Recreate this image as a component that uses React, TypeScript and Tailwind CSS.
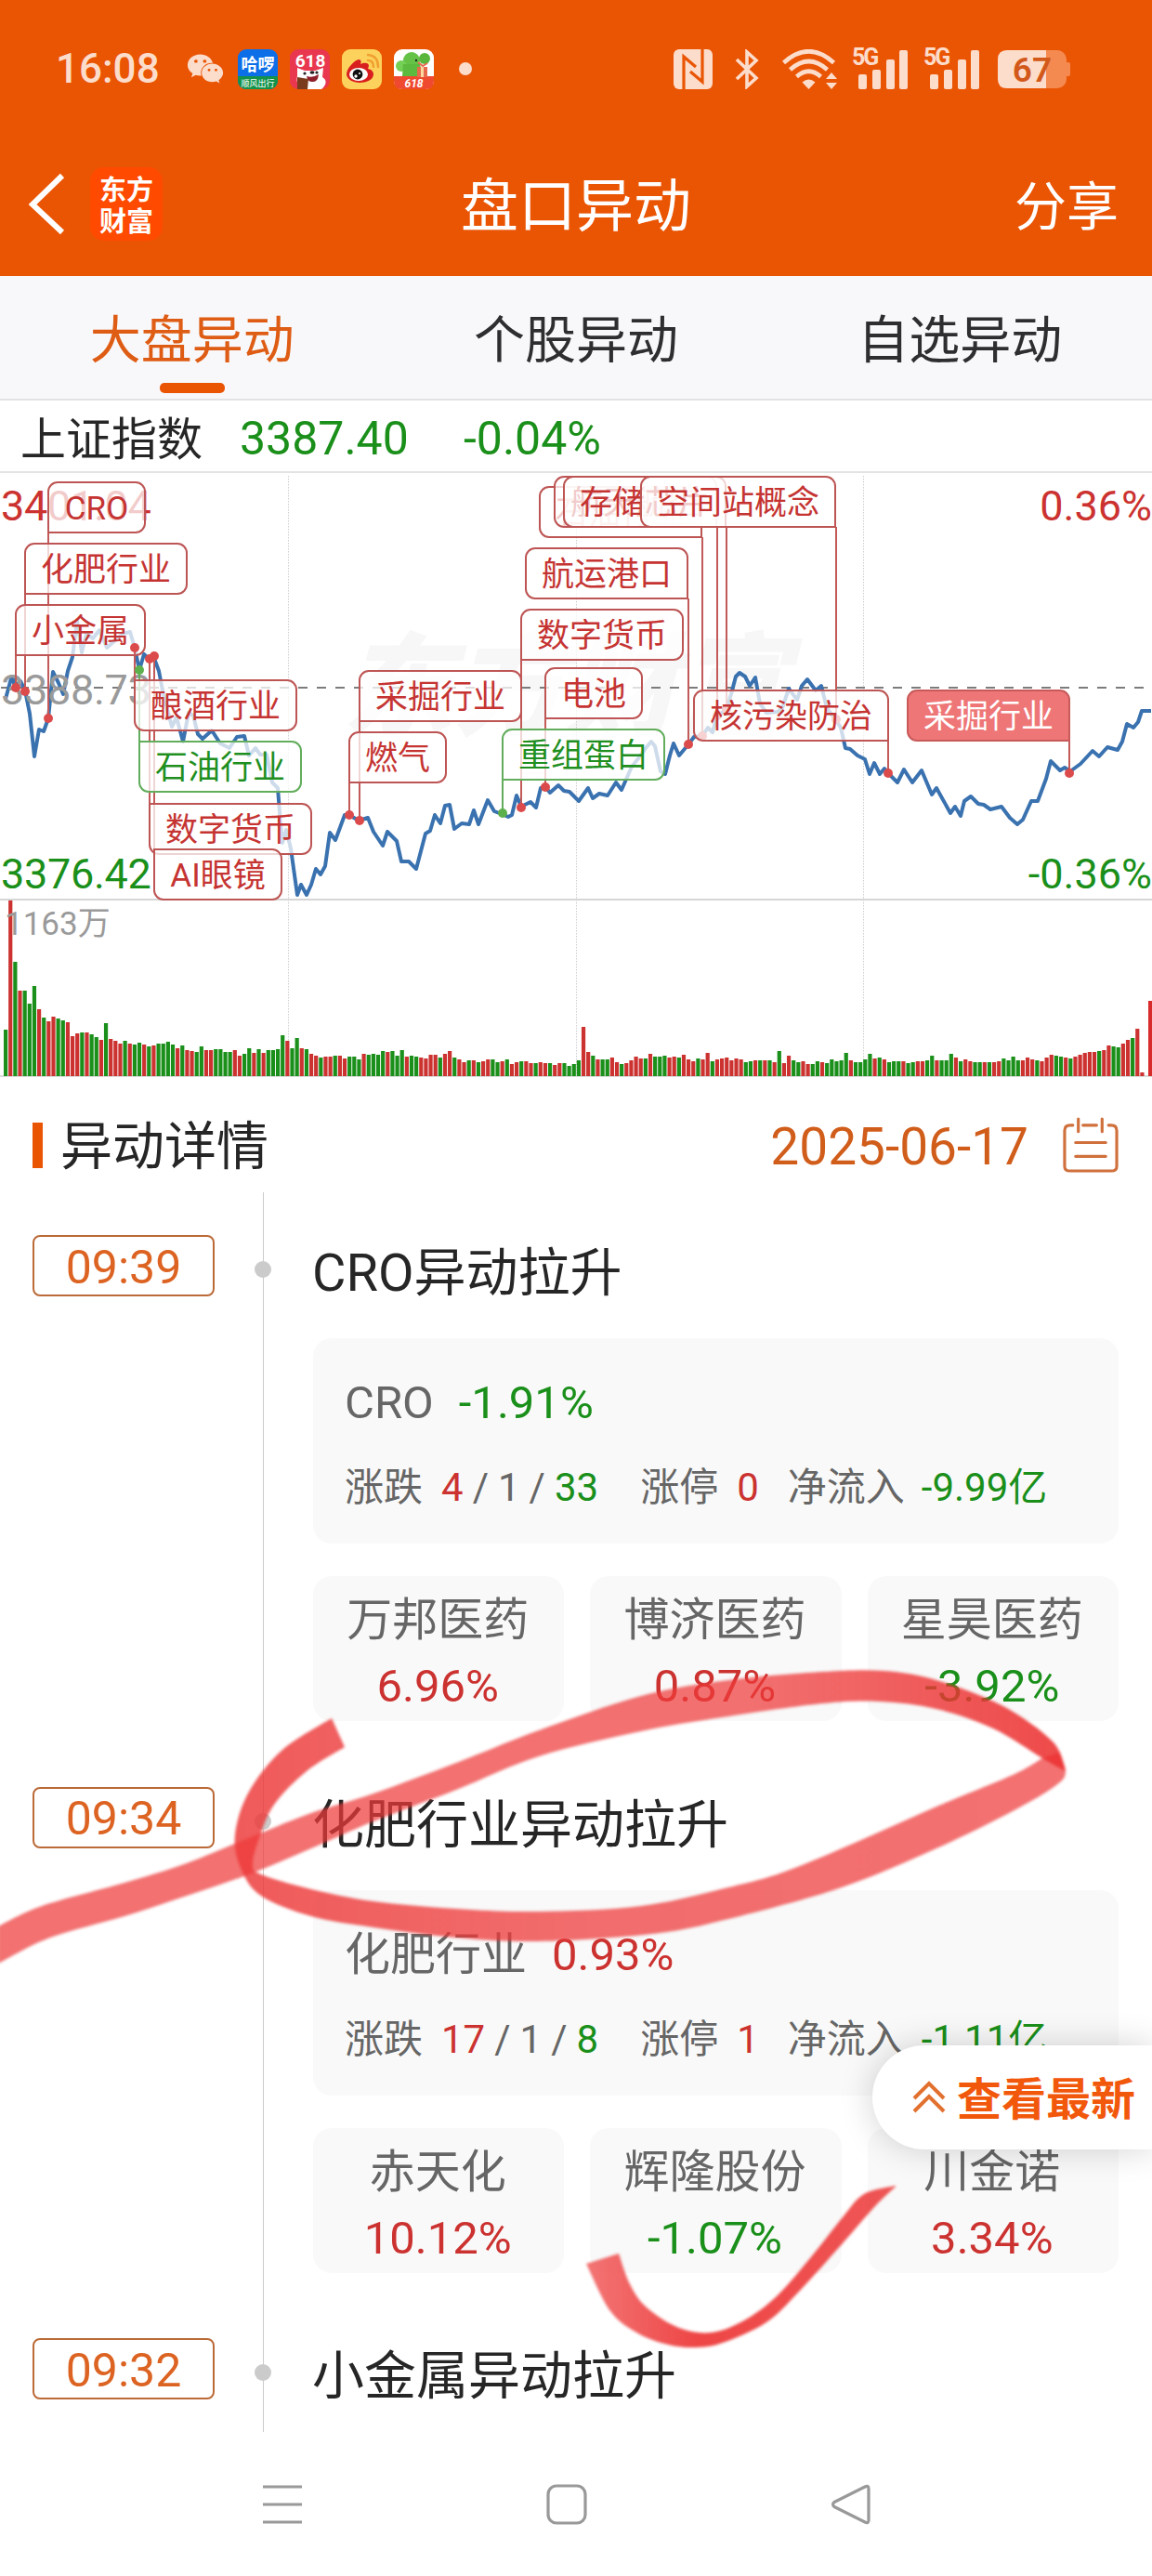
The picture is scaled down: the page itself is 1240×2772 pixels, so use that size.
import { FaWeixin } from "react-icons/fa";

type Point = [number, number];

const UP = "#cb3230";
const DOWN = "#1a8f1a";

// minute prices, in chart pixels (origin is the top left of the chart)
const PRICE_POINTS: Point[] = [
  [6, 243], [12, 221], [14, 222], [16, 230], [22, 224], [27, 234], [32, 259], [37, 305], [42, 276], [47, 278],
  [52, 264], [57, 214], [63, 226], [68, 238], [73, 213], [78, 198], [83, 159], [88, 193], [93, 173], [100, 178],
  [107, 169], [115, 188], [123, 181], [132, 173], [140, 171], [145, 188], [150, 212], [155, 195], [160, 200],
  [165, 197], [171, 213], [175, 234], [180, 254], [185, 273], [190, 263], [197, 289], [203, 258], [208, 261],
  [213, 281], [218, 286], [228, 277], [237, 291], [247, 296], [255, 284], [263, 283], [268, 304], [275, 296],
  [280, 303], [287, 303], [293, 333], [299, 339], [302, 378], [304, 398], [308, 384], [313, 404], [320, 454],
  [324, 443], [330, 454], [335, 443], [340, 426], [345, 432], [350, 423], [355, 387], [361, 395], [371, 368],
  [376, 368], [386, 374], [396, 371], [402, 386], [412, 401], [417, 386], [427, 396], [432, 418], [440, 418],
  [448, 426], [458, 388], [463, 385], [468, 368], [474, 377], [479, 358], [484, 357], [489, 383], [497, 377],
  [505, 378], [510, 363], [515, 378], [525, 352], [532, 364], [540, 367], [547, 370], [551, 368], [556, 347],
  [561, 359], [571, 354], [577, 360], [582, 339], [587, 338], [592, 344], [601, 336], [607, 342], [613, 343],
  [623, 353], [633, 339], [638, 350], [645, 345], [654, 347], [663, 333], [669, 341], [680, 316], [688, 306],
  [695, 296], [701, 289], [705, 294], [711, 321], [716, 324], [721, 304], [725, 291], [731, 304], [741, 292],
  [747, 284], [756, 283], [762, 274], [767, 279], [772, 261], [777, 258], [782, 254], [787, 238], [792, 219],
  [796, 215], [802, 219], [807, 229], [813, 220], [818, 248], [825, 258], [837, 257], [842, 253], [849, 232],
  [858, 244], [863, 229], [869, 222], [878, 234], [884, 229], [890, 253], [900, 266], [905, 274], [910, 296],
  [915, 297], [923, 304], [931, 308], [936, 324], [941, 312], [947, 324], [952, 318], [956, 323], [966, 333],
  [973, 319], [982, 333], [992, 320], [1003, 346], [1008, 339], [1023, 366], [1028, 359], [1034, 369],
  [1038, 353], [1045, 348], [1053, 356], [1059, 357], [1066, 362], [1078, 359], [1087, 371], [1095, 378],
  [1101, 373], [1110, 353], [1117, 353], [1126, 329], [1131, 310], [1141, 320], [1146, 317], [1152, 321],
  [1163, 313], [1176, 299], [1183, 305], [1192, 295], [1203, 298], [1208, 289], [1213, 270], [1220, 274],
  [1225, 268], [1229, 256], [1239, 256],
];

// volume per minute: r = up, g = down, followed by the height
const VOLUMES =
  "g50 r189 g123 r92 g92 g78 g97 r72 g63 r59 r64 g62 g60 r58 r43 r46 g47 r47 g45 g42 r39 g57 r40 r38 r35 g38 r35 g34 g36 r34 " +
  "g32 r33 g35 g35 g37 g34 r30 g33 r28 r27 g26 g32 r28 r28 g29 g29 g26 g26 r28 r22 g24 g30 r25 g29 r25 g28 g28 g29 g44 r38 " +
  "g30 g41 r30 g29 r24 r22 g20 r21 r21 g22 r22 r19 g21 g21 g18 r24 g23 g24 g23 g27 r26 g27 g22 g28 r21 g22 g21 r20 r19 r23 " +
  "r23 g20 r24 r27 g20 r18 r15 g17 r17 g15 r16 r18 g18 g15 r16 g18 r13 r15 g16 r16 r14 g14 r15 r14 g14 r12 r14 g14 g11 g13 " +
  "g17 r53 r26 g22 r18 g18 g18 r20 r15 g13 r14 r17 r21 r19 g19 r24 g21 g21 g22 r20 r21 g20 r23 r18 r16 g19 r18 r25 g16 r18 " +
  "r19 r20 r17 r19 r18 g15 g16 r17 g17 r17 g17 r15 g27 r14 r22 g17 g15 r16 r13 g13 g16 r15 g14 g18 g16 g17 g25 r17 g15 g15 " +
  "g18 g24 r19 g20 r18 g15 g16 g16 r16 g14 g15 r16 r16 g17 g22 r17 g17 g17 g24 r20 g16 r18 r16 g15 g15 r15 g15 r15 r16 g19 " +
  "g17 g21 g17 r17 r20 r18 g17 r16 r20 r23 g22 g21 r20 g19 r21 r23 r25 r26 r26 g27 r28 r33 g32 g31 r35 r39 g41 r51 r4";

interface Tag {
  label: string;
  x: number;
  y: number;
  w: number;
  dot: Point;
  side?: "right";
  color?: "green";
  filled?: boolean;
}

const EARLY_TAGS: Tag[] = [
  { label: "CRO", x: 51, y: 9, w: 106, dot: [52, 264] },
  { label: "化肥行业", x: 26, y: 75, w: 176, dot: [27, 235] },
  { label: "小金属", x: 16, y: 141, w: 141, dot: [17, 231] },
];

const TAGS: Tag[] = [
  { label: "酿酒行业", x: 144, y: 222, w: 176, dot: [145, 188] },
  { label: "石油行业", x: 149, y: 288, w: 176, dot: [150, 212], color: "green" },
  { label: "数字货币", x: 160, y: 355, w: 176, dot: [161, 200] },
  { label: "AI眼镜", x: 165, y: 404, w: 139, dot: [166, 197] },
  { label: "采掘行业", x: 386, y: 212, w: 176, dot: [387, 374] },
  { label: "燃气", x: 375, y: 278, w: 106, dot: [376, 368] },
  { label: "数字货币", x: 560, y: 146, w: 176, dot: [561, 360] },
  { label: "电池", x: 586, y: 209, w: 106, dot: [587, 338] },
  { label: "重组蛋白", x: 540, y: 275, w: 176, dot: [541, 366], color: "green" },
  { label: "航运港口", x: 565, y: 80, w: 176, dot: [741, 292], side: "right" },
  { label: "石油行业", x: 580, y: 14, w: 176, dot: [756, 283], side: "right" },
  { label: "航天航空", x: 596, y: 3, w: 176, dot: [772, 261], side: "right" },
  { label: "存储芯片", x: 606, y: 3, w: 176, dot: [782, 254], side: "right" },
  { label: "空间站概念", x: 689, y: 3, w: 211, dot: [900, 265], side: "right" },
  { label: "核污染防治", x: 746, y: 233, w: 211, dot: [956, 323], side: "right" },
  { label: "采掘行业", x: 976, y: 233, w: 176, dot: [1151, 323], side: "right", filled: true },
];

function cornerClass(tag: Tag) {
  const above = tag.dot[1] < tag.y;
  if (tag.side === "right") return "rounded-[11px] rounded-br-none";
  return above ? "rounded-[11px] rounded-tl-none" : "rounded-[11px] rounded-bl-none";
}

function Stems({ tags }: { tags: Tag[] }) {
  return (
    <svg className="absolute inset-0" width="1240" height="460">
      {tags.map((t) => (
        <g key={t.label + t.x}>
          <line
            x1={t.dot[0]}
            x2={t.dot[0]}
            y1={t.dot[1]}
            y2={t.dot[1] < t.y ? t.y : t.y + 55}
            stroke={t.color ? "#62ad5c" : "#c25a59"}
            strokeWidth="2"
          />
          <circle cx={t.dot[0]} cy={t.dot[1]} r="5" fill={t.color ? "#5db14c" : "#dc4b4b"} />
        </g>
      ))}
    </svg>
  );
}

function TagBox({ tag }: { tag: Tag }) {
  let tone = "border-[#bd5554] bg-white/75 text-[#c53432]";
  if (tag.color) tone = "border-[#62ad5c] bg-white/75 text-[#1f8f1f]";
  if (tag.filled) tone = "border-[#c85a5a] bg-[#ee7677] text-white";
  return (
    <div
      className={`absolute flex h-[56px] items-center justify-center border-2 pt-[3px] text-[35px] leading-none whitespace-nowrap ${tone} ${cornerClass(tag)}`}
      style={{ left: tag.x, top: tag.y, width: tag.w }}
    >
      {tag.label}
    </div>
  );
}

function StatusBar() {
  return (
    <div className="flex h-[148px] items-center pl-[60px] text-[#fcdccb]">
      <span className="w-[141px] text-[44px] leading-none font-medium">16:08</span>
      <FaWeixin className="h-[42px] w-[40px]" />
      <div className="ml-[15px] flex h-[43px] w-[43px] flex-col items-center overflow-hidden rounded-[9px] bg-[#0d6fe8] text-white">
        <span className="pt-[7px] text-[18px] leading-[20px] font-bold">哈啰</span>
        <span className="mt-[2px] w-full bg-[#12924a] pt-px text-center text-[9px] leading-[14px]">顺风出行</span>
      </div>
      <svg className="ml-[13px]" width="43" height="43" viewBox="0 0 43 43">
        <rect width="43" height="43" rx="9" fill="#e8374f" />
        <text x="22" y="19" fontSize="19" fontWeight="700" fill="#fff" textAnchor="middle">618</text>
        <path d="M8 20l8 3h11l9-3-1 10c5 3 5 8-1 13H14C7 38 7 33 8 29z" fill="#fff" />
        <circle cx="16" cy="26" r="1.6" fill="#222" />
        <circle cx="29" cy="25" r="1.6" fill="#222" />
        <ellipse cx="24" cy="25" rx="2.5" ry="1.7" fill="#222" />
        <path d="M18 29q7 2 13-2-1 9-7 8-5 0-6-6z" fill="#8f1f2a" />
        <path d="M8 30l12 2-1 11H8z" fill="#7a3b1d" />
      </svg>
      <svg className="ml-[13px]" width="43" height="43" viewBox="0 0 43 43">
        <rect width="43" height="43" rx="9" fill="#fdd25c" />
        <path d="M5 27c0-6 8-15 13-16 3 0 3 3 2 5 4-2 9-2 9 2l-1 3c5 1 6 4 6 6 0 6-8 9-15 9S5 32 5 27z" fill="#d81e1e" />
        <ellipse cx="18" cy="27" rx="10" ry="7" fill="#fff" />
        <circle cx="17" cy="27" r="5.4" fill="#111" />
        <circle cx="15" cy="29" r="1.7" fill="#fff" />
        <circle cx="19" cy="26" r="1" fill="#fff" />
        <path d="M28 12q6 0 6 7M28 6q11 1 11 13" fill="none" stroke="#f0a030" strokeWidth="2.6" strokeLinecap="round" />
      </svg>
      <svg className="ml-[13px]" width="43" height="43" viewBox="0 0 43 43">
        <rect width="43" height="43" rx="9" fill="#fff" />
        <path d="M0 29h43v5q0 9-9 9H9q-9 0-9-9z" fill="#ef4a30" />
        <circle cx="19" cy="12" r="9" fill="#66c247" />
        <circle cx="33" cy="10" r="6" fill="#59b53c" />
        <circle cx="8" cy="18" r="6" fill="#74cf55" />
        <path d="M10 16h18l3 13H9z" fill="#5cba3e" />
        <path d="M25 19h11v11H25z" fill="#e8694c" />
        <path d="M29 19h3v11h-3z" fill="#fbd9a0" />
        <path d="M26 14l5 4 5-3" fill="none" stroke="#e8694c" strokeWidth="2" />
        <circle cx="24" cy="12" r="1.2" fill="#222" />
        <text x="21.5" y="41" fontSize="12" fontWeight="700" fontStyle="italic" fill="#fff" textAnchor="middle">618</text>
      </svg>
      <div className="ml-[27px] h-[14px] w-[14px] rounded-full bg-[#fcdccb]" />

      <svg className="ml-[216px]" width="44" height="43" viewBox="0 0 44 43">
        <rect x="1" width="42" height="43" rx="6" fill="#fcdccb" />
        <path d="M12 43V8L25 19M32 0v35L19 24" fill="none" stroke="#ea5504" strokeWidth="3.2" />
      </svg>
      <svg className="ml-[23px]" width="26" height="43" viewBox="0 0 26 43">
        <path d="M2 11L23 31L13 40V3L23 12L2 32" fill="none" stroke="#fcdccb" strokeWidth="3.6" strokeLinejoin="miter" />
      </svg>
      <svg className="ml-[25px]" width="60" height="43" viewBox="0 0 60 43" fill="none" stroke="#fcdccb" strokeWidth="4.6">
        <path d="M1.500 14.500Q28.500-10 55.500 14.500" />
        <path d="M8.500 22Q28.500 4 48.500 22" />
        <path d="M15.500 29.500Q28.500 18 41.500 29.500" />
        <path d="M28.500 43l-7-7.500q7-6 14 0z" fill="#fcdccb" stroke="none" />
        <path d="M53 25l6 7H47zM53 43l6-7H47z" fill="#fcdccb" stroke="none" />
      </svg>
      {[0, 1].map((n) => (
        <div key={n} className="ml-[15px] flex h-[45px] w-[62px] shrink-0">
          <span className="-mt-px w-[4px] text-[25px] leading-[22px] font-bold tracking-[-2px] whitespace-nowrap">5G</span>
          <svg width="58" height="45" viewBox="4 0 58 45" fill="#fcdccb">
            <rect x="7" y="28" width="9" height="16" rx="2" />
            <rect x="22" y="23" width="9" height="21" rx="2" />
            <rect x="37" y="12" width="9" height="32" rx="2" />
            <rect x="51" y="2" width="9" height="42" rx="2" />
          </svg>
        </div>
      ))}
      <svg className="ml-[18px] shrink-0" width="79" height="41" viewBox="0 0 79 41">
        <rect width="74" height="41" rx="10" fill="#f58a51" />
        <rect x="73" y="13" width="5" height="15" rx="2" fill="#f58a51" />
        <path d="M10 0h42v41H10Q0 41 0 31V10Q0 0 10 0z" fill="#fcdccb" />
        <text x="37" y="33.500" fontSize="37" fontWeight="600" fill="#d2591a" textAnchor="middle">67</text>
      </svg>
    </div>
  );
}

function NavBar() {
  return (
    <div className="flex h-[149px] items-center text-white">
      <div className="flex w-[300px] items-center pb-[6px]">
        <svg className="ml-[30px] shrink-0" width="42" height="70" viewBox="0 0 42 70">
          <path d="M37 4L5 35L37 65" fill="none" stroke="#fff" strokeWidth="6" />
        </svg>
        <div className="ml-[25px] flex h-[79px] w-[78px] shrink-0 flex-col items-center justify-center rounded-[15px] bg-[#ff4a00] pt-[4px] text-[29px] leading-[34px] font-bold">
          <span>东方</span>
          <span>财富</span>
        </div>
      </div>
      <h1 className="flex-1 text-center text-[62px] leading-none font-normal">盘口异动</h1>
      <div className="w-[300px] pr-[36px] text-right text-[56px] leading-none">分享</div>
    </div>
  );
}

function Tabs() {
  const tabs = ["大盘异动", "个股异动", "自选异动"];
  return (
    <div className="grid h-[134px] grid-cols-3 border-b-2 border-[#e2e2e4] bg-[#f8f8fa]">
      {tabs.map((tab, i) => (
        <div key={tab} className={`flex flex-col items-center pt-[42px] text-[55px] leading-none ${i === 0 ? "text-[#de5c14]" : "text-[#2e2e30]"}`}>
          {tab}
          {i === 0 && <div className="mt-[18px] h-[11px] w-[70px] rounded-[5px] bg-[#ea5504]" />}
        </div>
      ))}
    </div>
  );
}

function Chart() {
  const bars = VOLUMES.split(" ").map((v) => ({ up: v[0] === "r", h: Number(v.slice(1)) }));
  return (
    <div className="relative h-[650px] overflow-hidden">
      <svg className="absolute inset-0" width="1240" height="650">
        <text x="608" y="273" fontSize="120" fontWeight="900" fontStyle="italic" fill="#f7f7f7" textAnchor="middle">东方财富</text>
        {[310.5, 620.5, 929.5].map((x) => (
          <line key={x} x1={x} x2={x} y1="3" y2="649" stroke="#cfcfcf" strokeWidth="1" strokeDasharray="1.500 1.500" />
        ))}
        <line x1="1" x2="1240" y1="231" y2="231" stroke="#7c7c7c" strokeWidth="2" strokeDasharray="10 10" />
        <line x1="0" x2="1240" y1="459" y2="459" stroke="#d6d6d6" strokeWidth="2" />
        <line x1="0" x2="1240" y1="649" y2="649" stroke="#dcdcdc" strokeWidth="2" />
        <polyline points={PRICE_POINTS.join(" ")} fill="none" stroke="#3a72b0" strokeWidth="4" strokeLinejoin="round" />
        {bars.map((b, i) => (
          <rect key={i} x={4 + i * 5.14} y={649 - b.h} width="4.200" height={b.h} fill={b.up ? UP : DOWN} />
        ))}
        <rect x="1236" y="568" width="4" height="81" fill="#d82c2c" />
      </svg>
      <span className="absolute top-[12px] left-[1px] text-[45px] leading-[48px] tracking-[-0.3px] text-[#cb3230]">3401.04</span>
      <span className="absolute top-[210px] left-[1px] text-[45px] leading-[48px] tracking-[-0.3px] text-[#9a9a9a]">3388.73</span>
      <span className="absolute top-[408px] left-[1px] text-[45px] leading-[48px] tracking-[-0.3px] text-[#1a8f1a]">3376.42</span>
      <span className="absolute top-[12px] right-0 text-[45px] leading-[48px] text-[#cb3230]">0.36%</span>
      <span className="absolute top-[408px] right-0 text-[45px] leading-[48px] text-[#1a8f1a]">-0.36%</span>
      <span className="absolute top-[466px] left-[5px] text-[35px] leading-[40px] text-[#9a9a9a]">1163万</span>
      <Stems tags={EARLY_TAGS} />
      {EARLY_TAGS.map((t) => (
        <TagBox key={t.label + t.x} tag={t} />
      ))}
      <Stems tags={TAGS} />
      {TAGS.map((t) => (
        <TagBox key={t.label + t.x} tag={t} />
      ))}
    </div>
  );
}

interface Stock {
  name: string;
  change: string;
}

interface Event {
  time: string;
  title: string;
  sector?: string;
  change?: string;
  counts?: string[];
  limitUp?: string;
  inflow?: string;
  stocks?: Stock[];
}

const EVENTS: Event[] = [
  {
    time: "09:39",
    title: "CRO异动拉升",
    sector: "CRO",
    change: "-1.91%",
    counts: ["4", "1", "33"],
    limitUp: "0",
    inflow: "-9.99亿",
    stocks: [
      { name: "万邦医药", change: "6.96%" },
      { name: "博济医药", change: "0.87%" },
      { name: "星昊医药", change: "-3.92%" },
    ],
  },
  {
    time: "09:34",
    title: "化肥行业异动拉升",
    sector: "化肥行业",
    change: "0.93%",
    counts: ["17", "1", "8"],
    limitUp: "1",
    inflow: "-1.11亿",
    stocks: [
      { name: "赤天化", change: "10.12%" },
      { name: "辉隆股份", change: "-1.07%" },
      { name: "川金诺", change: "3.34%" },
    ],
  },
  { time: "09:32", title: "小金属异动拉升" },
];

const tone = (value = "") => (value.startsWith("-") ? "text-[#1a8f1a]" : "text-[#cb3230]");

function EventItem({ event }: { event: Event }) {
  return (
    <div className="flex h-[593.5px]">
      <div className="w-[283px] pt-[46px] pl-[35px]">
        <div className="flex h-[66px] w-[196px] items-center justify-center rounded-[8px] border-2 border-[#bb6a38] pt-[3px] text-[50px] leading-none text-[#dc6322]">
          {event.time}
        </div>
      </div>
      <div className="flex w-[54px] justify-start border-l border-[#cbcbcb]">
        <div className="mt-[74px] -ml-[10px] h-[18px] w-[18px] rounded-full bg-[#cbcbcb]" />
      </div>
      <div className="w-[867px]">
        <h3 className="-ml-px pt-[59px] text-[56px] leading-[57px] font-normal text-[#262626]">{event.title}</h3>
        {event.counts && (
          <div className="mt-[41px] flex h-[221px] flex-col rounded-[20px] bg-[#f9f9f9] pl-[34px] leading-none text-[#666]">
            <div className="flex gap-[27px] pt-[46px] text-[49px] leading-[48px]">
              <span>{event.sector}</span>
              <span className={tone(event.change)}>{event.change}</span>
            </div>
            <div className="flex items-center pt-[46px] text-[42px]">
              <span>涨跌</span>
              <span className="ml-[20px] text-[#cb3230]">{event.counts[0]}</span>
              <span className="mx-[10px]">/</span>
              <span>{event.counts[1]}</span>
              <span className="mx-[10px]">/</span>
              <span className="text-[#1a8f1a]">{event.counts[2]}</span>
              <span className="ml-[45px]">涨停</span>
              <span className="ml-[20px] text-[#cb3230]">{event.limitUp}</span>
              <span className="ml-[31px]">净流入</span>
              <span className="ml-[18px] text-[#1a8f1a]">{event.inflow}</span>
            </div>
          </div>
        )}
        {event.stocks && (
          <div className="mt-[35px] grid grid-cols-3 gap-[28px]">
            {event.stocks.map((s) => (
              <div key={s.name} className="flex h-[156px] flex-col items-center rounded-[20px] bg-[#f9f9f9] pt-[24px] text-[49px] leading-[48px] text-[#666]">
                <span className="-ml-[2px]">{s.name}</span>
                <span className={`-ml-[2px] pt-[23px] ${tone(s.change)}`}>{s.change}</span>
              </div>
            ))}
          </div>
        )}
      </div>
    </div>
  );
}

// Catmull-Rom through the points, written as bezier segments
function curve(points: Point[]) {
  let d = "";
  for (let i = 0; i < points.length - 1; i++) {
    const p0 = points[i - 1] ?? points[i];
    const p1 = points[i];
    const p2 = points[i + 1];
    const p3 = points[i + 2] ?? p2;
    d += `C${p1[0] + (p2[0] - p0[0]) / 6} ${p1[1] + (p2[1] - p0[1]) / 6} ${p2[0] - (p3[0] - p1[0]) / 6} ${p2[1] - (p3[1] - p1[1]) / 6} ${p2[0]} ${p2[1]}`;
  }
  return d;
}

function brush(outer: Point[], inner: Point[]) {
  const back = [...inner].reverse();
  return `M${outer[0]}${curve(outer)}L${back[0]}${curve(back)}Z`;
}

const LOOP = brush(
  [[357, 1849], [304, 1883], [268, 1928], [253, 1974], [259, 2010], [281, 2040], [335, 2062], [402, 2074], [491, 2085], [580, 2089], [702, 2081], [784, 2065], [906, 2031], [1008, 1989], [1090, 1949], [1137, 1921], [1147, 1906], [1140, 1886]],
  [[371, 1880], [330, 1906], [295, 1942], [279, 1978], [272, 2006], [281, 2017], [335, 2033], [402, 2046], [491, 2054], [580, 2057], [690, 2051], [784, 2031], [845, 2014], [927, 1980], [1008, 1944], [1090, 1910], [1122, 1892]],
);

const SWEEP = brush(
  [[1147, 1906], [1133, 1874], [1078, 1835], [1008, 1808], [951, 1798], [886, 1799], [784, 1808], [690, 1825], [580, 1862], [491, 1897], [402, 1930], [335, 1951], [277, 1974], [201, 2005], [134, 2026], [45, 2051], [-2, 2073]],
  [[1147, 1906], [1122, 1892], [1069, 1860], [1008, 1839], [947, 1831], [886, 1833], [784, 1847], [690, 1863], [580, 1890], [491, 1926], [402, 1960], [335, 1989], [268, 2017], [201, 2040], [134, 2062], [54, 2085], [-2, 2113]],
);

const CHECK = brush(
  [[631, 2436], [657, 2487], [687, 2511], [719, 2523], [748, 2526], [778, 2521], [825, 2499], [860, 2466], [907, 2414], [942, 2374], [964, 2353]],
  [[666, 2425], [678, 2458], [696, 2483], [731, 2505], [766, 2510], [801, 2497], [836, 2471], [872, 2430], [907, 2386], [930, 2361], [964, 2352]],
);

// hand drawn marker over the page
function Marker() {
  return (
    <svg className="pointer-events-none absolute inset-0" width="1240" height="2772">
      <defs>
        <linearGradient id="check" gradientUnits="userSpaceOnUse" x1="640" y1="0" x2="960" y2="0">
          <stop offset="0" stopColor="#ee3a3a" stopOpacity="0.72" />
          <stop offset="0.35" stopColor="#ec3030" stopOpacity="0.9" />
          <stop offset="1" stopColor="#ec3535" stopOpacity="0.84" />
        </linearGradient>
        <linearGradient id="sweep" gradientUnits="userSpaceOnUse" x1="0" y1="0" x2="1147" y2="0">
          <stop offset="0.7" stopColor="#ee3a3a" stopOpacity="0.72" />
          <stop offset="1" stopColor="#ec3030" stopOpacity="0.88" />
        </linearGradient>
        <linearGradient id="loop" gradientUnits="userSpaceOnUse" x1="253" y1="0" x2="1147" y2="0">
          <stop offset="0" stopColor="#ec3535" stopOpacity="0.82" />
          <stop offset="0.4" stopColor="#ee3a3a" stopOpacity="0.74" />
          <stop offset="1" stopColor="#ee3a3a" stopOpacity="0.72" />
        </linearGradient>
      </defs>
      <g className="blur-[1.5px]">
        <path d={LOOP} fill="url(#loop)" />
        <path d={SWEEP} fill="url(#sweep)" />
        <path d={CHECK} fill="url(#check)" />
      </g>
    </svg>
  );
}

export default function App() {
  return (
    <div className="relative h-[2772px] w-[1240px] overflow-hidden bg-white font-[Roboto,'Noto_Sans_CJK_SC',sans-serif]">
      <header className="h-[297px] bg-[#ea5504]">
        <StatusBar />
        <NavBar />
      </header>
      <Tabs />
      <div className="flex h-[78px] items-center border-b-2 border-[#e3e3e3] pt-[5px] pl-[22px] leading-none">
        <span className="w-[236px] pt-[3px] text-[49px] text-[#262626]">上证指数</span>
        <span className="w-[241px] text-[50px] text-[#1a8f1a]">3387.40</span>
        <span className="text-[50px] text-[#1a8f1a]">-0.04%</span>
      </div>
      <Chart />

      <div className="flex h-[124px] items-center pt-[22px] pr-[36px] pl-[35px]">
        <div className="h-[49px] w-[11px] bg-[#ea5504]" />
        <h2 className="flex-1 pt-[4px] pl-[19px] text-[56px] leading-none font-normal text-[#262626]">异动详情</h2>
        <span className="pt-[4px] pr-[36px] text-[55px] leading-none text-[#d15d1b]">2025-06-17</span>
        <svg width="61" height="61" viewBox="0 0 62 62" fill="none" stroke="#d0703c" strokeWidth="3.200" strokeLinecap="round">
          <path d="M12 9H9Q3 9 3 15V54Q3 59 9 59H54Q60 59 60 54V15Q60 9 54 9H51M23 9H38M18 2V16M44 2V16M15 28H48M15 43H48" />
        </svg>
      </div>

      <div className="h-[1334px] overflow-hidden">
        {EVENTS.map((e) => (
          <EventItem key={e.time} event={e} />
        ))}
      </div>

      <nav className="flex h-[155px] items-center" aria-label="系统导航">
        <svg className="ml-[281px]" width="46" height="46" viewBox="0 0 46 46" stroke="#999" strokeWidth="3.200">
          <path d="M2 4H44M2 23H44M2 42H44" />
        </svg>
        <svg className="ml-[260px]" width="46" height="46" viewBox="0 0 46 46" fill="none" stroke="#999" strokeWidth="3.200">
          <rect x="3" y="3" width="40" height="40" rx="9" />
        </svg>
        <svg className="ml-[261px]" width="46" height="46" viewBox="0 0 46 46" fill="none" stroke="#999" strokeWidth="3.200" strokeLinejoin="round">
          <path d="M4 20.500L37 4Q41 2 41 6V40Q41 44 37 42L4 25.500Q1 23 4 20.500Z" />
        </svg>
      </nav>

      <button className="absolute top-[2201px] right-0 flex h-[112px] w-[301px] items-center rounded-l-full bg-white pl-[43px] text-[48px] font-bold text-[#f2580b] shadow-[0_0_36px_rgba(0,0,0,0.18)]">
        <svg width="36" height="36" viewBox="0 0 36 36" fill="none" stroke="#e2702f" strokeWidth="4">
          <path d="M2 19L18 3L34 19M2 33L18 17L34 33" />
        </svg>
        <span className="pt-[5px] pl-[12px] leading-none whitespace-nowrap">查看最新</span>
      </button>
      <Marker />
    </div>
  );
}
